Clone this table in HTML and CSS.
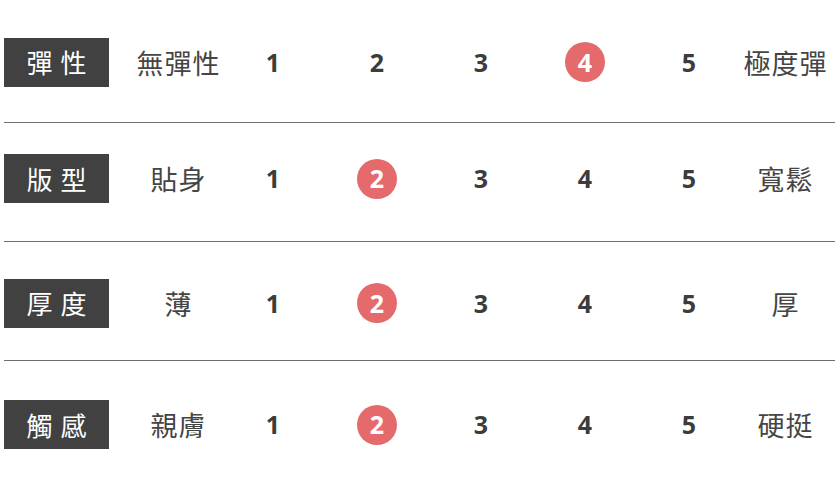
FILE: index.html
```html
<!DOCTYPE html>
<html lang="zh-Hant">
<head>
<meta charset="utf-8">
<link rel="stylesheet" href="styles.css">
</head>
<body>
<div class="chart">
  <div class="row">
    <div class="label">彈性</div>
    <div class="low">無彈性</div>
    <div class="num">1</div>
    <div class="num">2</div>
    <div class="num">3</div>
    <div class="num"><span class="dot">4</span></div>
    <div class="num">5</div>
    <div class="high">極度彈</div>
  </div>
  <div class="row row-2">
    <div class="label">版型</div>
    <div class="low">貼身</div>
    <div class="num">1</div>
    <div class="num"><span class="dot">2</span></div>
    <div class="num">3</div>
    <div class="num">4</div>
    <div class="num">5</div>
    <div class="high">寬鬆</div>
  </div>
  <div class="row row-3">
    <div class="label">厚度</div>
    <div class="low">薄</div>
    <div class="num">1</div>
    <div class="num"><span class="dot">2</span></div>
    <div class="num">3</div>
    <div class="num">4</div>
    <div class="num">5</div>
    <div class="high">厚</div>
  </div>
  <div class="row row-4">
    <div class="label">觸感</div>
    <div class="low">親膚</div>
    <div class="num">1</div>
    <div class="num"><span class="dot">2</span></div>
    <div class="num">3</div>
    <div class="num">4</div>
    <div class="num">5</div>
    <div class="high">硬挺</div>
  </div>
</div>
</body>
</html>
```
FILE: styles.css
```css
html, body {
  margin: 0;
  padding: 0;
  background: #ffffff;
}
body {
  font-family: "Noto Sans CJK TC", "Noto Sans", sans-serif;
  color: #444444;
}
.chart {
  padding: 4px 5px 0 4px;
}
.row {
  display: grid;
  grid-template-columns: 105px 112px repeat(5, 104px) 88px;
  align-items: center;
  height: 119px;
  box-sizing: border-box;
  border-bottom: 1px solid #6f6f6f;
  width: 831px;
}
.row:first-child {
  padding-bottom: 2px;
}
.row-2 {
  padding-bottom: 7px;
}
.row-3 {
  padding-top: 4px;
}
.row-4 {
  border-bottom: none;
  padding-top: 8px;
}
.label {
  height: 49px;
  background: #414141;
  color: #ffffff;
  font-size: 26px;
  letter-spacing: 8px;
  padding-left: 8px;
  display: flex;
  align-items: center;
  justify-content: center;
  line-height: 1;
  white-space: nowrap;
}
.low, .high {
  font-size: 27px;
  letter-spacing: 1px;
  text-align: center;
  line-height: 1;
  color: #454545;
  white-space: nowrap;
}
.low {
  padding-left: 27px;
}
.high {
  padding-left: 1px;
}
.num {
  font-family: "Open Sans", "Liberation Sans", sans-serif;
  font-weight: 700;
  font-size: 25px;
  color: #3c3c3c;
  display: flex;
  justify-content: center;
  align-items: center;
  line-height: 1;
}
.dot {
  width: 40px;
  height: 40px;
  border-radius: 50%;
  background: #e46a6c;
  color: #ffffff;
  display: flex;
  align-items: center;
  justify-content: center;
}
```
